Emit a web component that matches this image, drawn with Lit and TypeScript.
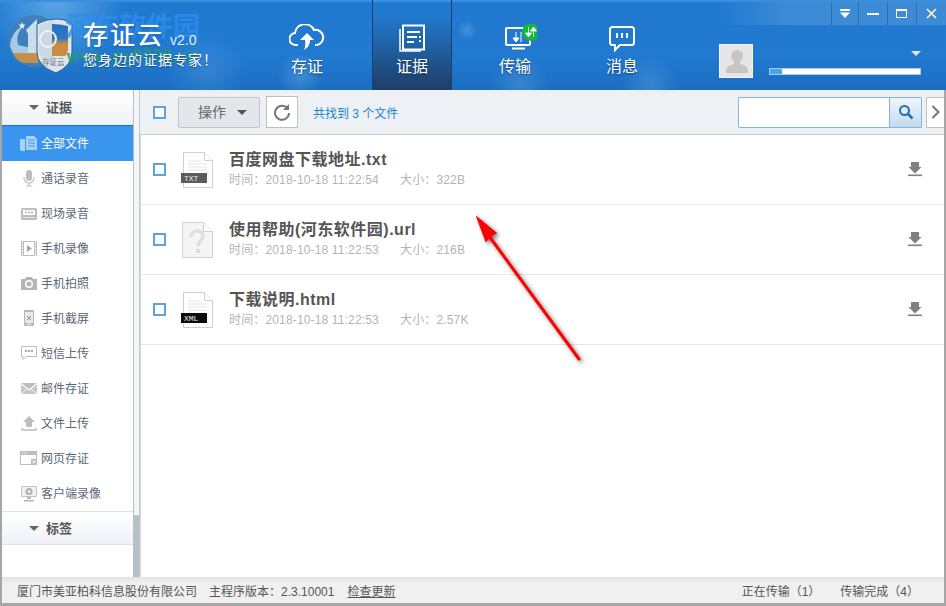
import { LitElement, html, css, svg } from "lit";
import { customElement } from "lit/decorators.js";

const I: Record<string, unknown> = {
  all: svg`<path d="M0 4h5v12H2a2 2 0 0 1-2-2zM6 1h8l3 3v11H6z" fill="#a9d2f8"/><path d="M8 5h7M8 8h7M8 11h7" stroke="#3a95ee" stroke-width="1.2"/>`,
  mic: svg`<rect x="6" y="0" width="6" height="11" rx="3" fill="#bdbdbd"/><path d="M4 7v1a5 5 0 0 0 10 0V7M9 13v3M6 16h6" fill="none" stroke="#bdbdbd" stroke-width="1.2"/>`,
  tape: svg`<rect x="1" y="3" width="16" height="12" rx="1.5" fill="#bdbdbd"/><rect x="3" y="5" width="12" height="5" fill="#fff"/><path d="M5 7.500h8" stroke="#bdbdbd" stroke-width="2" stroke-dasharray="2 1"/><path d="M3 12.500h12" stroke="#e6e6e6"/>`,
  film: svg`<path d="M1.500 1v15M3.500 1v15M14.500 1v15M16.500 1v15" stroke="#bdbdbd" fill="none"/><path d="M1 3.500h3M1 6.500h3M1 9.500h3M1 12.500h3M14 3.500h3M14 6.500h3M14 9.500h3M14 12.500h3M4 1.500h10M4 15.500h10" stroke="#bdbdbd"/><path d="M7 5l5 3.500L7 12z" fill="#a8a8a8"/>`,
  cam: svg`<path d="M1 4h4l1-2h6l1 2h4v11H1z" fill="#b5b5b5"/><circle cx="9" cy="9" r="4" fill="#fff"/><circle cx="9" cy="9" r="2.500" fill="#b5b5b5"/>`,
  phone: svg`<rect x="4" y="0" width="10" height="16" rx="1" fill="#b8b8b8"/><rect x="5" y="2" width="8" height="11" fill="#e9e9e9"/><path d="M7 6l4 4M11 6l-4 4" stroke="#8f8f8f"/><rect x="7" y="14" width="4" height="1" fill="#eee"/>`,
  sms: svg`<path d="M1.500 1.500h15v10H6l-3 3v-3H1.500z" fill="#fff" stroke="#bdbdbd"/><path d="M5 5h2v2H5zM8 5h2v2H8zM11 5h2v2h-2z" fill="#a8a8a8"/>`,
  mail: svg`<path d="M1 3h16L9 9z" fill="#bdbdbd"/><path d="M1 4.500v9.500h16V4.500L9 10.500z" fill="#c6c6c6"/><path d="M1 14l6-5M17 14l-6-5" stroke="#fff" stroke-width=".8"/>`,
  up: svg`<path d="M9 1l6 6h-3v5H6V7H3z" fill="#bdbdbd"/><path d="M2 13v2h14v-2" fill="none" stroke="#bdbdbd" stroke-width="1.500"/>`,
  web: svg`<rect x=".5" y="1.500" width="16" height="13" fill="#fff" stroke="#bdbdbd"/><rect x="1" y="2" width="15" height="3" fill="#bdbdbd"/><path d="M2 3h1M4 3h1M6 3h1" stroke="#fff"/><rect x="11" y="9" width="6" height="6" fill="#bdbdbd"/><path d="M12.500 10.500l3 3M15.500 10.500l-3 3" stroke="#fff" stroke-width=".8"/>`,
  cli: svg`<rect x="1" y="1" width="16" height="11" rx="1" fill="#c4c4c4"/><rect x="2" y="2" width="14" height="9" fill="#f1f1f1"/><circle cx="9" cy="6.500" r="3.500" fill="#b0b0b0"/><circle cx="9" cy="6.500" r="1.500" fill="#eee"/><path d="M7 12h4v2H7zM4 15h10v1.500H4z" fill="#b5b5b5"/>`,
};

const MENU: [string, string][] = [
  ["all", "全部文件"], ["mic", "通话录音"], ["tape", "现场录音"], ["film", "手机录像"], ["cam", "手机拍照"],
  ["phone", "手机截屏"], ["sms", "短信上传"], ["mail", "邮件存证"], ["up", "文件上传"], ["web", "网页存证"], ["cli", "客户端录像"],
];

const FILES = [
  { name: "百度网盘下载地址.txt", time: "2018-10-18 11:22:54", size: "322B", kind: "TXT" },
  { name: "使用帮助(河东软件园).url", time: "2018-10-18 11:22:53", size: "216B", kind: "?" },
  { name: "下载说明.html", time: "2018-10-18 11:22:53", size: "2.57K", kind: "XML" },
];

function fileIcon(kind: string) {
  if (kind === "?") {
    return svg`<svg class="ficon" width="34" height="38" viewBox="0 0 34 38">
      <path d="M1.500 1.500h21l9 9v26h-30z" fill="#f5f5f5" stroke="#cfcfcf"/><path d="M22.500 1.500v9h9" fill="#fff" stroke="#cfcfcf"/>
      <path d="M10 16c0-8 12-8 12-1 0 5-5 5-5 10" fill="none" stroke="#dedede" stroke-width="3.500"/><rect x="15" y="28" width="4" height="4" fill="#dedede"/>
    </svg>`;
  }
  const bg = kind === "TXT" ? "#5b5b5b" : "#0c0c0c";
  return svg`<svg class="ficon" width="34" height="38" viewBox="0 0 34 38">
    <path d="M2.500 1.500h21l8 8v27h-29z" fill="#fff" stroke="#cfcfcf"/><path d="M23.500 1.500v8h8" fill="#fff" stroke="#cfcfcf"/>
    <path d="M7 10h13M7 13h19M7 16h19M7 19h19" stroke="#e4e4e4"/>
    <rect x="0" y="22" width="26" height="10" fill="${bg}"/>
    <text x="3" y="30" font-size="8" font-family="Liberation Mono, monospace" fill="#e8e8e8">${kind}</text>
  </svg>`;
}

@customElement("app-root")
export class AppRoot extends LitElement {
  static styles = css`
    :host { display: block; width: 946px; height: 606px; overflow: hidden; position: relative;
      font-family: "Liberation Sans", "Noto Sans CJK SC", sans-serif; font-size: 12px; background: #a6a6a6; }
    .win { display: flex; flex-direction: column; height: 606px; box-sizing: border-box; }
    header { height: 90px; flex: none; display: flex; position: relative; color: #fff; overflow: hidden;
      background:
        linear-gradient(#3a8edd 0, #3a8edd 2px, transparent 2px),
        radial-gradient(circle at 55px 0, rgba(120,190,240,.65), transparent 70px),
        radial-gradient(circle at 207px 72px, rgba(90,160,225,.35), transparent 40px),
        radial-gradient(circle at 300px 75px, rgba(120,180,235,.4), transparent 22px),
        radial-gradient(circle at 467px 30px, rgba(120,180,235,.4), transparent 10px),
        radial-gradient(circle at 520px 85px, rgba(120,180,235,.3), transparent 30px),
        radial-gradient(circle at 650px 85px, rgba(120,180,235,.3), transparent 30px),
        linear-gradient(#2079cf 0, #217ad0 55px, #1b6dc2 90px); }
    .brand { width: 267px; flex: none; position: relative; }
    .logo { position: absolute; left: 6px; top: 10px; }
    .title { position: absolute; left: 83px; top: 18px; font-size: 25px; line-height: 34px; letter-spacing: 2px;
      text-shadow: 0 0 1px #fff, 0 1px 2px rgba(0,40,90,.5); white-space: nowrap; }
    .ver { position: absolute; left: 170px; top: 31px; font-size: 14px; line-height: 18px; color: #e4effa; }
    .slogan { position: absolute; left: 83px; top: 51px; font-size: 14px; line-height: 18px; white-space: nowrap; letter-spacing: 1px;
      text-shadow: 0 1px 1px rgba(0,40,90,.5); }
    .wm1 { position: absolute; left: 65px; top: 11px; font-size: 27px; line-height: 32px; font-weight: 700; color: rgba(44,142,238,.8); white-space: nowrap; }
    .wm2 { position: absolute; left: 66px; top: 46px; font-size: 18px; line-height: 20px; font-weight: 700; color: rgba(44,156,76,.85); white-space: nowrap; letter-spacing: 1px; font-family: "Liberation Serif", serif; }
    nav { display: flex; height: 90px; }
    .tab { width: 80px; height: 90px; box-sizing: border-box; flex: none; display: flex; flex-direction: column; align-items: center;
      padding-top: 24px; font-size: 16px; }
    .tab svg { height: 30px; display: block; }
    .tab span { margin-top: 1px; line-height: 24px; text-shadow: 0 1px 2px rgba(0,30,70,.6); }
    .tab.on { background: linear-gradient(rgba(30,90,160,0) 15px, #1f3f68 90px); border-left: 1px solid #1b3f6a; border-right: 1px solid #1b3f6a; }
    .g25 { margin-left: 25px; } .g23 { margin-left: 23px; } .g27 { margin-left: 27px; }
    .strip { position: absolute; right: 0; top: 2px; width: 226px; height: 23px; display: flex; justify-content: flex-end;
      background: linear-gradient(90deg, rgba(255,255,255,0), rgba(255,255,255,.13) 30%); }
    .ctl { width: 29px; height: 23px; box-sizing: border-box; border-left: 1px solid rgba(20,80,150,.45); display: flex; align-items: center; justify-content: center; }
    .ctl:first-child { width: 27px; }
    .ctl:last-child { width: 30px; }
    .avatar { position: absolute; left: 719px; top: 44px; width: 34px; height: 34px; box-sizing: border-box; border: 1px solid #f5f5f5; background: #e6e6e6; }
    .caret { position: absolute; left: 911px; top: 51px; width: 0; height: 0; border: 5px solid transparent; border-top: 5px solid #dbe7f3; border-bottom: 0; }
    .prog { position: absolute; left: 769px; top: 68px; width: 152px; height: 7px; box-sizing: border-box; background: #fff; border: 1px solid #a8cbee; }
    .prog i { display: block; width: 12px; height: 100%; background: #4aa3f2; }

    .main { flex: 1; min-height: 0; display: flex; padding: 0 2px; }
    aside { width: 131px; flex: none; background: #fff; display: flex; flex-direction: column; }
    .sec { height: 35px; flex: none; display: flex; align-items: center; padding: 0 0 2px 27px; box-sizing: border-box; gap: 7px; font-size: 13px; font-weight: 700; color: #555;
      background: linear-gradient(#fff, #eef2f7); border-bottom: 1px solid #dde0e4; }
    .sec i { width: 0; height: 0; border: 5px solid transparent; border-top: 5px solid #666; border-bottom: 0; margin-top: 2px; }
    .sec.first { border-bottom: 1px solid #1f6fc4; height: 36px; }
    .sec.tag { border-top: 1px solid #dde0e4; height: 34px; }
    .item { height: 35px; flex: none; display: flex; align-items: center; padding-left: 18px; gap: 3px; color: #5b6875; }
    .item svg { flex: none; width: 18px; height: 18px; }
    .item span { margin-top: -2px; }
    .item.on { background: #3a95ee; color: #fff; }
    .bar { width: 7px; flex: none; display: flex; flex-direction: column; border-left: 1px solid #b9bfc6; border-right: 1px solid #c3c8cf; box-sizing: border-box; background: #b9bfc6; }
    .bar i { display: block; height: 425px; background: #f3f5f7; border-bottom: 1px solid #ccc; }
    .content { flex: 1; min-width: 0; display: flex; flex-direction: column; background: #fff; position: relative; }
    .tools { height: 45px; flex: none; box-sizing: border-box; background: #edf0f5; border-bottom: 1px solid #c9ccd3; display: flex; align-items: center; padding-left: 13px; }
    .ck { width: 13px; height: 13px; box-sizing: border-box; border: 2px solid #5aa6da; background: #fff; flex: none; }
    .op { margin-left: 12px; width: 82px; height: 31px; box-sizing: border-box; border: 1px solid #c2c6cb; border-radius: 2px; background: #e3e6ea;
      display: flex; align-items: center; justify-content: center; gap: 11px; padding: 0 0 2px 7px; font-size: 14px; color: #666; }
    .op i { width: 0; height: 0; border: 5px solid transparent; border-top: 5px solid #555; border-bottom: 0; margin-top: 2px; }
    .re { margin-left: 6px; width: 32px; height: 32px; box-sizing: border-box; border: 1px solid #c0c0c0; background: #fff; display: flex; align-items: center; justify-content: center; }
    .found { margin-left: 15px; color: #1b87c9; }
    .search { margin-left: auto; width: 184px; height: 31px; box-sizing: border-box; border: 1px solid #82b5e0; background: #fff; display: flex; justify-content: flex-end; border-radius: 1px; }
    .search b { width: 31px; height: 100%; border-left: 1px solid #82b5e0; background: linear-gradient(#f0f5fa, #c4daee); display: flex; align-items: center; justify-content: center; }
    .next { margin-left: 4px; width: 18px; height: 31px; box-sizing: border-box; border: 1px solid #c0c0c0; border-right: 0; background: #fff; display: flex; align-items: center; justify-content: center; }
    .list { flex: 1; border-left: 1px solid #d5d8dd; }
    .row { height: 70px; box-sizing: border-box; border-bottom: 1px solid #e6e6e6; display: flex; align-items: center; padding-left: 12px; }
    .ficon { margin-left: 15px; flex: none; display: block; }
    .txt { margin-left: 14px; padding-bottom: 2px; display: flex; flex-direction: column; }
    .nm { font-size: 16px; line-height: 22px; font-weight: 700; color: #555; white-space: nowrap; letter-spacing: .5px; }
    .meta { margin-top: 1px; line-height: 16px; color: #b4b4b4; display: flex; white-space: nowrap; letter-spacing: .15px; }
    .meta span:first-child { width: 171px; }
    .dl { margin-left: auto; margin-right: 22px; display: block; }
    .arrow { position: absolute; left: 330px; top: 120px; filter: drop-shadow(2px 2px 2px rgba(0,0,0,.55)); }
    .status { height: 26px; flex: none; margin: 0 2px; box-sizing: border-box; background: linear-gradient(#e2e2e2, #f0f0f0 6px); display: flex; align-items: center; padding-left: 15px; color: #555; white-space: nowrap; }
    .status u { margin-left: 13px; }
    .ver2 { margin-left: 12px; }
    .r1 { margin-left: auto; }
    .r2 { margin-left: 20px; margin-right: 25px; }
    .foot { height: 3px; flex: none; }
  `;

  render() {
    return html`<div class="win">
      <header>
        <div class="brand">
          <svg class="logo" width="68" height="66" viewBox="0 0 68 66">
            <defs><linearGradient id="sh" x1="0" y1="0" x2="0" y2="1"><stop offset="0" stop-color="#2272c6"/><stop offset=".45" stop-color="#2f78bf"/><stop offset=".62" stop-color="#c98d42"/><stop offset="1" stop-color="#c98d42"/></linearGradient></defs>
            <circle cx="28" cy="31" r="26" fill="#3f80ba"/>
            <path d="M4 36Q5 22 17 16Q9 26 12 35L30 39V43H7z" fill="#a5cbe9"/>
            <path d="M7 43H32V53H17Q10 50 7 43z" fill="#c88f4a"/>
            <path d="M20 20L31 9V43H22V24z" fill="#c9dded"/>
            <path d="M16 12l1 2.500 2.500.3-2 1.600.7 2.600-2.200-1.500-2.200 1.500.7-2.600-2-1.600 2.500-.3z" fill="#e6f0f8"/>
            <path d="M31 14q9-5 19-5t16 5v28q0 14-16 21q-19-7-19-21z" fill="#dde4ea" stroke="#2a5f9e" stroke-width="1"/>
            <path d="M33 15q8-3 15-4v44q-15-5-15-16z" fill="#c9d6e0" opacity=".85"/>
            <path d="M46 14q8 0 16 2v24q-1 4-3 6H46z" fill="url(#sh)"/>
            <circle cx="42" cy="29" r="8" fill="none" stroke="#eef2f5" stroke-width="2"/>
            <text x="36" y="55" font-size="7.500" fill="#6a7680">存证云</text>
          </svg>
          <div class="wm1">河东软件园</div>
          <div class="title">存证云</div>
          <div class="ver">v2.0</div>
          <div class="wm2">www.pc0359.cn</div>
          <div class="slogan">您身边的证据专家！</div>
        </div>
        <nav>
          <div class="tab">
            <svg width="36" height="30" viewBox="0 0 36 30"><path d="M9 21H7a6 6 0 0 1-1-12 10 10 0 0 1 19-3 7.500 7.500 0 0 1 3 15h-2" fill="none" stroke="#fff" stroke-width="2"/><path d="M18 9l7 7h-4q0 7-6 10 2-4 1-10h-5z" fill="#fff"/></svg>
            <span>存证</span>
          </div>
          <div class="tab on g25">
            <svg width="28" height="30" viewBox="0 0 28 30"><path d="M2 5v22h21" fill="none" stroke="#fff" stroke-width="1.500"/><rect x="5" y="1.500" width="21" height="24" fill="none" stroke="#fff" stroke-width="2"/><path d="M9 7h13v2H9zM9 12h10v2H9zM21 12h2v2h-2zM9 17h7v2H9zM21 16h2v2h-2z" fill="#fff"/></svg>
            <span>证据</span>
          </div>
          <div class="tab g23">
            <svg width="44" height="30" viewBox="0 0 44 30"><rect x="13" y="4" width="24" height="17" rx="1" fill="none" stroke="#fff" stroke-width="2"/><path d="M19 24.500h13" stroke="#fff" stroke-width="2"/><path d="M23 8v10M23 18l-3-4h6zM28 18V8" stroke="#fff" fill="#fff"/><circle cx="38" cy="8" r="9" fill="#15b63c"/><path d="M35.500 3v10M35.500 13l-3-4h6zM40.500 13V3M40.500 3l-3 4h6z" stroke="#fff" fill="#fff" stroke-width=".8"/></svg>
            <span>传输</span>
          </div>
          <div class="tab g27">
            <svg width="28" height="30" viewBox="0 0 28 30"><path d="M4 3h20a2.500 2.500 0 0 1 2 2v14a2.500 2.500 0 0 1-2 2H12l-5 5v-5H4a2.500 2.500 0 0 1-2-2V5a2.500 2.500 0 0 1 2-2z" fill="none" stroke="#fff" stroke-width="2"/><path d="M8 9h2v5H8zM13 9h2v5h-2zM18 9h2v5h-2z" fill="#fff"/></svg>
            <span>消息</span>
          </div>
        </nav>
        <div class="strip">
          <div class="ctl"><svg width="12" height="10" viewBox="0 0 12 10"><path d="M1 0h10v2H1zM1 3.500h10L6 9z" fill="#fff"/></svg></div>
          <div class="ctl"><svg width="12" height="4" viewBox="0 0 12 4"><rect y="1" width="12" height="2" fill="#fff"/></svg></div>
          <div class="ctl"><svg width="12" height="10" viewBox="0 0 12 10"><rect x=".5" y=".5" width="10" height="8" fill="none" stroke="#fff"/><rect width="11" height="2" fill="#fff"/></svg></div>
          <div class="ctl"><svg width="11" height="11" viewBox="0 0 11 11"><path d="M1 1l9 9M10 1l-9 9" stroke="#fff" stroke-width="1.500"/></svg></div>
        </div>
        <div class="avatar"><svg width="32" height="32" viewBox="0 0 32 32"><circle cx="17" cy="11" r="6" fill="#c6c6c6"/><path d="M6 28v-3q1-5 8-6v-3h6v3q7 1 8 6v3z" fill="#c6c6c6"/></svg></div>
        <div class="caret"></div>
        <div class="prog"><i></i></div>
      </header>
      <div class="main">
        <aside>
          <div class="sec first"><i></i>证据</div>
          ${MENU.map(([k, t], idx) => html`<div class="item ${idx === 0 ? "on" : ""}"><svg viewBox="0 0 18 18">${I[k]}</svg><span>${t}</span></div>`)}
          <div class="sec tag"><i></i>标签</div>
        </aside>
        <div class="bar"><i></i></div>
        <div class="content">
          <div class="tools">
            <div class="ck"></div>
            <div class="op">操作<i></i></div>
            <div class="re"><svg width="18" height="18" viewBox="0 0 18 18"><path d="M14.500 5.500A7 7 0 1 0 16 10" fill="none" stroke="#777" stroke-width="2"/><path d="M16 1v6h-6z" fill="#777"/></svg></div>
            <div class="found">共找到 3 个文件</div>
            <div class="search"><b><svg width="16" height="16" viewBox="0 0 16 16"><circle cx="6.500" cy="6.500" r="4.500" fill="none" stroke="#2a6ea8" stroke-width="2"/><path d="M10 10l4.500 4.500" stroke="#2a6ea8" stroke-width="2.500"/></svg></b></div>
            <div class="next"><svg width="9" height="14" viewBox="0 0 9 14"><path d="M1.500 1l6 6-6 6" fill="none" stroke="#777" stroke-width="2"/></svg></div>
          </div>
          <div class="list">
            ${FILES.map(f => html`<div class="row">
              <div class="ck"></div>
              ${fileIcon(f.kind)}
              <div class="txt">
                <div class="nm">${f.name}</div>
                <div class="meta"><span>时间：${f.time}</span><span>大小：${f.size}</span></div>
              </div>
              <svg class="dl" width="14" height="15" viewBox="0 0 14 15"><path d="M3 0h8v5h2.500L7 11.500.5 5H3z" fill="#808080"/><rect x="0" y="12.500" width="14" height="1.600" fill="#808080"/></svg>
            </div>`)}
          </div>
          <svg class="arrow" width="120" height="160" viewBox="0 0 120 160">
            <path d="M19 26L109 149" stroke="#f00" stroke-width="3" stroke-linecap="round"/>
            <path d="M6.500 6.500L26.500 23 20 26.700 16 31.700z" fill="#f00" stroke="#f00"/>
          </svg>
        </div>
      </div>
      <div class="status">
        <span>厦门市美亚柏科信息股份有限公司</span><span class="ver2">主程序版本：2.3.10001</span><u>检查更新</u>
        <span class="r1">正在传输（1）</span><span class="r2">传输完成（4）</span>
      </div>
      <div class="foot"></div>
    </div>`;
  }
}
